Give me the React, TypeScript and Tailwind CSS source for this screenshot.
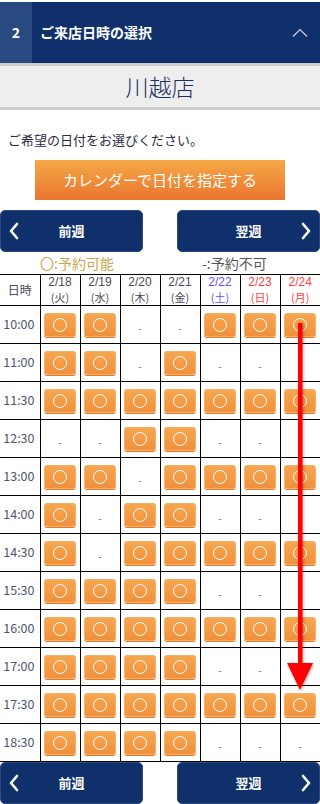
import React from 'react';

type Day = { date: string; wd: string; tone: 'week' | 'sat' | 'sun' };

const days: Day[] = [
  { date: '2/18', wd: '(火)', tone: 'week' },
  { date: '2/19', wd: '(水)', tone: 'week' },
  { date: '2/20', wd: '(木)', tone: 'week' },
  { date: '2/21', wd: '(金)', tone: 'week' },
  { date: '2/22', wd: '(土)', tone: 'sat' },
  { date: '2/23', wd: '(日)', tone: 'sun' },
  { date: '2/24', wd: '(月)', tone: 'sun' },
];

// 1 = 予約可能, 0 = 予約不可
const slots: [string, number[]][] = [
  ['10:00', [1, 1, 0, 0, 1, 1, 1]],
  ['11:00', [1, 1, 0, 1, 0, 0, 0]],
  ['11:30', [1, 1, 1, 1, 1, 1, 1]],
  ['12:30', [0, 0, 1, 1, 0, 0, 0]],
  ['13:00', [1, 1, 0, 1, 1, 1, 1]],
  ['14:00', [1, 0, 1, 1, 0, 0, 0]],
  ['14:30', [1, 0, 1, 1, 1, 1, 1]],
  ['15:30', [1, 1, 1, 1, 0, 0, 0]],
  ['16:00', [1, 1, 1, 1, 1, 1, 1]],
  ['17:00', [1, 1, 1, 1, 0, 0, 0]],
  ['17:30', [1, 1, 1, 1, 1, 1, 1]],
  ['18:30', [1, 1, 1, 1, 0, 0, 0]],
];

const toneClass = {
  week: 'text-[#4a4a55]',
  sat: 'text-[#6b4dff]',
  sun: 'text-[#ff4040]',
};

function Chevron({ dir }: { dir: 'left' | 'right' }) {
  return (
    <svg width="12" height="18" viewBox="0 0 12 18" fill="none" stroke="white" strokeWidth="2.6" strokeLinecap="round" strokeLinejoin="round">
      {dir === 'left' ? <path d="M9 2 L3 9 L9 16" /> : <path d="M3 2 L9 9 L3 16" />}
    </svg>
  );
}

function WeekNav() {
  return (
    <div className="flex justify-between h-[42px]">
      <button className="w-[143px] h-full rounded-[5px] bg-[#10306c] border border-[#2d4a80] flex items-center px-[7px] text-white text-[13px] font-bold">
        <Chevron dir="left" />
        <span className="flex-1 text-center pr-[12px]">前週</span>
      </button>
      <button className="w-[143px] h-full rounded-[5px] bg-[#10306c] border border-[#2d4a80] flex items-center px-[7px] text-white text-[13px] font-bold">
        <span className="flex-1 text-center pl-[12px]">翌週</span>
        <Chevron dir="right" />
      </button>
    </div>
  );
}

function SlotButton() {
  return (
    <div className="mx-auto w-[32px] h-[24px] rounded-[3px] bg-gradient-to-b from-[#f7a650] to-[#f0913c] border border-[#f6b06a] shadow-[0_1px_0_#e07a2a] flex items-center justify-center">
      <span className="w-[14px] h-[14px] rounded-full border-[1.5px] border-white" />
    </div>
  );
}

export default function App() {
  return (
    <div className="relative w-[320px] bg-white pt-[2px] pb-[2px] font-['Noto_Sans_CJK_JP','Noto_Sans',sans-serif]">
      <div className="flex h-[61px] bg-[#10306c] text-white">
        <div className="w-[32px] bg-[#294a80] flex items-center justify-center text-[14px] font-bold">2</div>
        <div className="flex-1 flex items-center pl-[8px] text-[14px] font-bold">ご来店日時の選択</div>
        <div className="flex items-center pr-[12px]">
          <svg width="16" height="9" viewBox="0 0 16 9" fill="none" stroke="#c9d3e6" strokeWidth="1.2">
            <path d="M1 8.5 L8 1.5 L15 8.5" />
          </svg>
        </div>
      </div>

      <div className="border-t-[3px] border-b-[3px] border-[#cccccc] bg-[#eeeeee] h-[47px] flex items-center justify-center">
        <span className="text-[23px] font-light text-[#1c2f5e] leading-none">川越店</span>
      </div>

      <p className="mt-[21px] pl-[8px] text-[13px] text-[#2b2b40] leading-[18px]">ご希望の日付をお選びください。</p>

      <div className="mt-[11px] flex justify-center">
        <button className="w-[250px] h-[40px] bg-gradient-to-b from-[#f5a846] to-[#e9752f] text-white text-[15px]">
          カレンダーで日付を指定する
        </button>
      </div>

      <div className="mt-[10px]">
        <WeekNav />
      </div>

      <div className="flex h-[22px] items-center text-[14px] leading-[20px]">
        <span className="ml-[40px] text-[#c9a94e]">〇:予約可能</span>
        <span className="ml-[88px] text-[#555]">-:予約不可</span>
      </div>

      <table className="w-[320px] border-collapse table-fixed">
        <colgroup>
          <col className="w-[40px]" />
          {days.map(d => (
            <col key={d.date} className="w-[40px]" />
          ))}
        </colgroup>
        <thead>
          <tr className="h-[31px]">
            <th className="border-t border-b border-r border-black text-[12px] font-normal text-[#4a4a55] leading-[14px]">日時</th>
            {days.map((d, i) => (
              <th
                key={d.date}
                className={`border-t border-b border-black font-normal p-0 ${i < 6 ? 'border-r' : ''} ${toneClass[d.tone]}`}
              >
                <div className="text-[12px] leading-[14px] font-['Liberation_Sans',sans-serif]">{d.date}</div>
                <div className="text-[11px] leading-[16px]">{d.wd}</div>
              </th>
            ))}
          </tr>
        </thead>
        <tbody>
          {slots.map(([time, row]) => (
            <tr key={time} className="h-[38px]">
              <td className="border-b border-r border-black text-[12.5px] text-[#4e5570] text-right pr-[5px]">{time}</td>
              {row.map((v, i) => (
                <td key={i} className={`border-b border-black text-center ${i < 6 ? 'border-r' : ''}`}>
                  {v ? <SlotButton /> : <span className="text-[10px] text-[#6a7090]">-</span>}
                </td>
              ))}
            </tr>
          ))}
        </tbody>
      </table>

      <WeekNav />

      <svg className="absolute left-[280px] top-[318px]" width="40" height="380" viewBox="0 0 40 380">
        <defs>
          <filter id="sh" x="-50%" y="-10%" width="200%" height="120%">
            <feDropShadow dx="1" dy="1" stdDeviation="1.5" floodColor="#000" floodOpacity="0.35" />
          </filter>
        </defs>
        <g filter="url(#sh)" fill="#ff0000">
          <rect x="18" y="5" width="4.5" height="345" />
          <polygon points="7,345 33,345 20,372" />
        </g>
      </svg>
    </div>
  );
}
